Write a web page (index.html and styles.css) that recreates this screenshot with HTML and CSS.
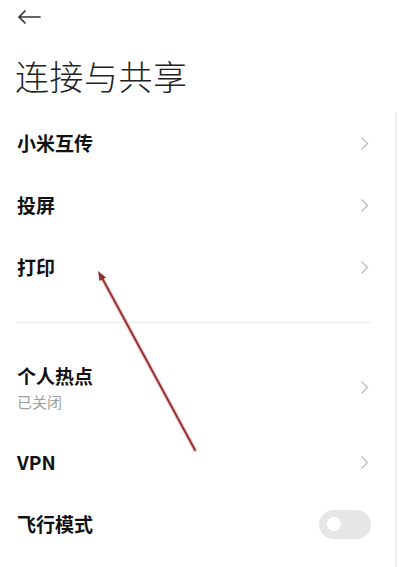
FILE: index.html
```html
<!DOCTYPE html>
<html lang="zh">
<head>
<meta charset="utf-8">
<link rel="stylesheet" href="styles.css">
</head>
<body>
<div class="screen">
  <div class="topbar">
    <svg class="back" width="24" height="14" viewBox="0 0 24 14"><path d="M23 7H2M8 1L2 7l6 6" fill="none" stroke="#333" stroke-width="1.7" stroke-linecap="round" stroke-linejoin="round"/></svg>
  </div>
  <h1 class="title">连接与共享</h1>
  <div class="list">
    <div class="row"><span class="label">小米互传</span><svg class="chev" width="9" height="15" viewBox="0 0 9 15"><path d="M1.5 1.5l6 6-6 6" fill="none" stroke="#bcbcbc" stroke-width="1.3"/></svg></div>
    <div class="row"><span class="label">投屏</span><svg class="chev" width="9" height="15" viewBox="0 0 9 15"><path d="M1.5 1.5l6 6-6 6" fill="none" stroke="#bcbcbc" stroke-width="1.3"/></svg></div>
    <div class="row"><span class="label">打印</span><svg class="chev" width="9" height="15" viewBox="0 0 9 15"><path d="M1.5 1.5l6 6-6 6" fill="none" stroke="#bcbcbc" stroke-width="1.3"/></svg></div>
  </div>
  <div class="divider"></div>
  <div class="list">
    <div class="row row-tall"><div class="texts"><span class="label">个人热点</span><span class="sub">已关闭</span></div><svg class="chev" width="9" height="15" viewBox="0 0 9 15"><path d="M1.5 1.5l6 6-6 6" fill="none" stroke="#bcbcbc" stroke-width="1.3"/></svg></div>
    <div class="row"><span class="label">VPN</span><svg class="chev" width="9" height="15" viewBox="0 0 9 15"><path d="M1.5 1.5l6 6-6 6" fill="none" stroke="#bcbcbc" stroke-width="1.3"/></svg></div>
    <div class="row"><span class="label">飞行模式</span><div class="toggle"><div class="knob"></div></div></div>
  </div>
  <div class="scrollbar"></div>
  <svg class="annot" width="400" height="567" viewBox="0 0 400 567">
    <line x1="195" y1="450" x2="101" y2="276" stroke="#f4c4c4" stroke-width="4" stroke-linecap="round"/>
    <line x1="195" y1="450" x2="101" y2="276" stroke="#8e2f2f" stroke-width="1.8" stroke-linecap="round"/>
    <path d="M98 271l8 6.5-6.5 3.5z" fill="#8e2f2f"/>
  </svg>
</div>
</body>
</html>
```
FILE: styles.css
```css
html, body {
  margin: 0;
  padding: 0;
  background: #ffffff;
}
.screen {
  position: relative;
  width: 400px;
  height: 567px;
  overflow: hidden;
  font-family: "Noto Sans CJK SC", "Noto Sans", sans-serif;
  color: #111;
}
.topbar {
  height: 34px;
  display: flex;
  align-items: center;
  padding-left: 17px;
}
.back {
  display: block;
}
.title {
  margin: 22px 0 0 15px;
  font-size: 34px;
  line-height: 40px;
  font-weight: 300;
  color: #222;
  letter-spacing: 0.5px;
}
.list {
  display: flex;
  flex-direction: column;
}
.title + .list {
  margin-top: 16px;
}
.row {
  height: 62px;
  display: flex;
  align-items: center;
  justify-content: space-between;
  padding: 0 30px 0 17px;
}
.row-tall {
  height: 87px;
}
.label {
  font-size: 19px;
  font-weight: 700;
  line-height: 24px;
  color: #111;
}
.texts {
  display: flex;
  flex-direction: column;
}
.sub {
  font-size: 15px;
  line-height: 20px;
  color: #a0a0a0;
  margin-top: 4px;
}
.chev {
  display: block;
  margin-right: 1px;
}
.divider {
  height: 1px;
  background: #ececec;
  margin: 24px 29px 21px 16px;
}
.toggle {
  width: 52px;
  height: 29px;
  border-radius: 15px;
  background: #e6e6e6;
  display: flex;
  align-items: center;
  padding-left: 8px;
  box-sizing: border-box;
  margin-right: -1px;
}
.knob {
  width: 14px;
  height: 14px;
  border-radius: 50%;
  background: #fff;
}
.scrollbar {
  position: absolute;
  right: 3px;
  top: 112px;
  bottom: 0;
  width: 2px;
  background: #eeeeee;
}
.annot {
  position: absolute;
  left: 0;
  top: 0;
  pointer-events: none;
}
```
